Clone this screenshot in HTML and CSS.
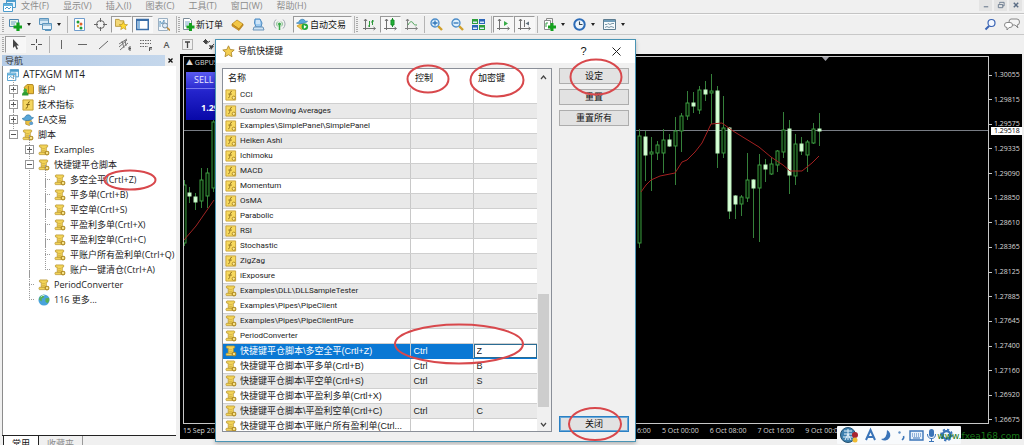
FILE: index.html
```html
<!DOCTYPE html>
<html lang="zh-CN">
<head>
<meta charset="utf-8">
<title>ATFXGM MT4</title>
<link rel="stylesheet" href="styles.css">
</head>
<body>
<svg class="defs" aria-hidden="true">
  <symbol id="i-app" viewBox="0 0 13 13"><path d="M3.500.5h9v8h-9z" fill="#e8f4fc" stroke="#4c9ccc"/><path d="M3.500 2h9" stroke="#4c9ccc" stroke-width="2"/><path d="M.5 4.500h9v8h-9z" fill="#fff" stroke="#4c9ccc"/><path d="M.5 6h9" stroke="#5fb0dc" stroke-width="2"/><path d="M2 10l2-2 2 2 2-2" fill="none" stroke="#4c9ccc"/></symbol>
  <symbol id="i-new" viewBox="0 0 13 13"><path d="M.5 1.500h9v7h-9z" fill="#eaf6ea" stroke="#4f86ae"/><path d="M2 4h5M2 6h4" stroke="#6da0c2"/><path d="M9 4.500V13M4.500 9H13" stroke="#12a01c" stroke-width="3.200"/></symbol>
  <symbol id="i-wins" viewBox="0 0 13 13"><path d="M.5.5h9v6h-9z" fill="#d4e7f5" stroke="#5c95bd"/><path d="M1 2h8" stroke="#5c95bd"/><path d="M3.500 5.500h9v6h-9z" fill="#e8f3fb" stroke="#5c95bd"/><path d="M4 7h8M6 12.500h6" stroke="#5c95bd"/></symbol>
  <symbol id="i-market" viewBox="0 0 13 13"><path d="M1.500.5h10v12h-10z" fill="#fdfdfd" stroke="#6f9ccc"/><circle cx="5" cy="4" r="1.500" fill="#1e9e34"/><circle cx="8" cy="6" r="1.500" fill="#e0602a"/><circle cx="5" cy="8" r="1.200" fill="#d8a030"/><circle cx="8" cy="10" r="1.500" fill="#1e9e34"/></symbol>
  <symbol id="i-target" viewBox="0 0 13 13"><circle cx="6.500" cy="6.500" r="4" fill="none" stroke="#666"/><path d="M6.500 0v13M0 6.500h13" stroke="#666"/><path d="M6.500 4v5M4 6.500h5" stroke="#f4f4f4" stroke-width="2"/></symbol>
  <symbol id="i-navstar" viewBox="0 0 14 13"><path d="M.5 2.500V1h4l1 1.500h4v6h-9z" fill="#f3d878" stroke="#b8983c"/><path d="M9 3.500l1.300 2.900 3.200.3-2.400 2.100.7 3.200L9 10.300 6.200 12l.7-3.200-2.400-2.100 3.200-.3z" fill="#ffd92e" stroke="#b8901c" stroke-width=".7"/></symbol>
  <symbol id="i-panel" viewBox="0 0 13 13"><path d="M.75 1.500h11.500v10H.750z" fill="#fff" stroke="#3a6ea8" stroke-width="1.500"/><path d="M1 2h11" stroke="#3a6ea8" stroke-width="2"/><path d="M2 3h2v8H2z" fill="#8ab8e0"/></symbol>
  <symbol id="i-tester" viewBox="0 0 13 13"><path d="M1.500.5h9v12h-9z" fill="#f2f7fb" stroke="#9cb0c2"/><path d="M3 9V3l2 3 2-4v5" fill="none" stroke="#6a9fc4"/><circle cx="8" cy="7.500" r="2.500" fill="#dcecf8" stroke="#7890a8"/><path d="M10 9.500l3 3" stroke="#c09040" stroke-width="1.600"/></symbol>
  <symbol id="i-order" viewBox="0 0 13 13"><path d="M1.500.5h6l2 2v9h-8z" fill="#fff" stroke="#7b8b98"/><path d="M3 4h5M3 6h4M3 8h2" stroke="#7fa8c8"/><path d="M8.500 5v8M4.500 9h8" stroke="#14a11e" stroke-width="3"/></symbol>
  <symbol id="i-book" viewBox="0 0 13 13"><path d="M1 6l5-4 6 4-4 5z" fill="#f3c746" stroke="#b07e14" stroke-width=".7"/><path d="M1 6v2l7 4.500 4-5V6l-4 5z" fill="#d79a20" stroke="#a87410" stroke-width=".6"/></symbol>
  <symbol id="i-user" viewBox="0 0 13 13"><path d="M3 1h5l2 4-1 4H4L2.500 5z" fill="#9dcaf0" stroke="#4a88c0"/><path d="M4 3h4M4 5h4" stroke="#fff"/><path d="M1 12l1-3h9l1 3z" fill="#cfe3f3" stroke="#6a94ba"/></symbol>
  <symbol id="i-signal" viewBox="0 0 13 13"><path d="M3 1.500a6 6 0 0 0 0 9M10 1.500a6 6 0 0 1 0 9" fill="none" stroke="#a0a8b0"/><path d="M5 3.500a3 3 0 0 0 0 5M8 3.500a3 3 0 0 1 0 5" fill="none" stroke="#7bbd84"/><circle cx="6.500" cy="6" r="1.500" fill="#38a848"/><path d="M6.500 7v5" stroke="#38a848" stroke-width="1.500"/></symbol>
  <symbol id="i-auto" viewBox="0 0 14 13"><path d="M1 8L7 5l5 3-6 4z" fill="#f0c445" stroke="#b68a1c" stroke-width=".7"/><path d="M.5 5C3 6 10 6 12.500 3L10 3C9 0 4 0 3 4z" fill="#5aa9de" stroke="#2f78ac" stroke-width=".7"/><circle cx="9.500" cy="9" r="3.500" fill="#22aa38"/><path d="M8.500 7v4l3-2z" fill="#fff"/></symbol>
  <symbol id="i-bars" viewBox="0 0 13 13"><path d="M2.500 1v11M0 10.500h12M1 3l1.500-2L4 3M10.500 9l2 1.500-2 1.500" fill="none" stroke="#707070"/><path d="M6.500 3v6M5 8h2M9.500 2v5M8 4h2M9 3h2" stroke="#2a9838"/></symbol>
  <symbol id="i-candle" viewBox="0 0 13 13"><path d="M2.500 1v11M0 10.500h12M1 3l1.500-2L4 3M10.500 9l2 1.500-2 1.500" fill="none" stroke="#707070"/><path d="M8.500 0v9" stroke="#168c26"/><path d="M7 2h3v5H7z" fill="#22b438" stroke="#168c26"/></symbol>
  <symbol id="i-line" viewBox="0 0 13 13"><path d="M2.500 1v11M0 10.500h12M1 3l1.500-2L4 3M10.500 9l2 1.500-2 1.500" fill="none" stroke="#808080"/><path d="M3 7c2-4 4-4 5-2s2 2 4 2" fill="none" stroke="#4aa055"/></symbol>
  <symbol id="i-zin" viewBox="0 0 13 13"><path d="M8 8l4 4" stroke="#d0a02c" stroke-width="2.400"/><circle cx="5" cy="5" r="4" fill="#dff0fc" stroke="#4c8cc8" stroke-width="1.300"/><path d="M5 2.500v5M2.500 5h5" stroke="#2f74b8" stroke-width="1.300"/></symbol>
  <symbol id="i-zout" viewBox="0 0 13 13"><path d="M8 8l4 4" stroke="#d0a02c" stroke-width="2.400"/><circle cx="5" cy="5" r="4" fill="#dff0fc" stroke="#4c8cc8" stroke-width="1.300"/><path d="M2.500 5h5" stroke="#2f74b8" stroke-width="1.300"/></symbol>
  <symbol id="i-tiles" viewBox="0 0 13 13"><path d="M0 1h6v5H0z" fill="#2d9e3a"/><path d="M7 1h6v5H7z" fill="#2b66b8"/><path d="M0 7h6v5H0z" fill="#2b66b8"/><path d="M7 7h6v5H7z" fill="#2d9e3a"/><path d="M1 3.500h4v1.500H1zM8 3.500h4v1.500H8zM1 9.500h4V11H1zM8 9.500h4V11H8z" fill="#dbeafa"/></symbol>
  <symbol id="i-scroll" viewBox="0 0 13 13"><path d="M2.500 1v11M0 10.500h12M1 3l1.500-2L4 3M10.500 9l2 1.500-2 1.500" fill="none" stroke="#707070"/><path d="M7 3v5l4-2.500z" fill="#38ac48"/></symbol>
  <symbol id="i-shift" viewBox="0 0 13 13"><path d="M2.500 1v11M0 10.500h12M1 3l1.500-2L4 3M10.500 9l2 1.500-2 1.500" fill="none" stroke="#707070"/><path d="M6.500 2v7" stroke="#707070"/><path d="M11 3.500v4L7.500 5.500z" fill="#60707c"/></symbol>
  <symbol id="i-ind" viewBox="0 0 13 13"><path d="M3.500.5h6v9h-6z" fill="#f4f4f4" stroke="#8a8a8a"/><path d="M1.500 2.500h6v9h-6z" fill="#fff" stroke="#8a8a8a"/><path d="M3 9V5h2" fill="none" stroke="#3aa048"/><path d="M9 5v8M5 9h8" stroke="#14a11e" stroke-width="3"/></symbol>
  <symbol id="i-clock" viewBox="0 0 13 13"><circle cx="6.500" cy="6.500" r="5.200" fill="#eef6fd" stroke="#2c6cb8" stroke-width="2"/><path d="M6.500 3.500v3h3" fill="none" stroke="#345" stroke-width="1.100"/></symbol>
  <symbol id="i-tmpl" viewBox="0 0 13 13"><path d="M.5 1.500h12v10H.5z" fill="#f6fafc" stroke="#5c7c90"/><path d="M1 3h11" stroke="#6f9cb8" stroke-width="2"/><path d="M2 6.500h2l1-1 2 1 2-1h2M2 9.500l2-1 2 1 2-1 3 1" fill="none" stroke="#7d99a8"/></symbol>
  <symbol id="i-find" viewBox="0 0 13 13"><path d="M1.500 11.500L5 8" stroke="#3a64b4" stroke-width="2"/><circle cx="7.500" cy="5" r="3.500" fill="#f4f8ff" stroke="#3a64b4" stroke-width="1.200"/></symbol>
  <symbol id="i-chat" viewBox="0 0 16 13"><path d="M7 1h6q2.500 0 2.500 3T13 7l1 3-3-3H7Q5 7 5 4t2-3z" fill="#f4f4f4" stroke="#888"/><path d="M3 4.500h3q2.500 0 2.500 2.500T6 9.500H5L3 12V9.500Q.5 9.500.5 7T3 4.500z" fill="#fff" stroke="#888"/></symbol>
  <symbol id="i-cursor" viewBox="0 0 13 13"><path d="M4 1v9l2-2 1.500 3.500L9 11 7.500 7.500H10z" fill="#444"/></symbol>
  <symbol id="i-cross" viewBox="0 0 13 13"><path d="M6.500 1v4M6.500 8v4M1 6.500h4M8 6.500h4" stroke="#555"/></symbol>
  <symbol id="i-vl" viewBox="0 0 13 13"><path d="M6.500 2v9" stroke="#666"/></symbol>
  <symbol id="i-hl" viewBox="0 0 13 13"><path d="M2 6.500h9" stroke="#666"/></symbol>
  <symbol id="i-dl" viewBox="0 0 13 13"><path d="M2 11l9-8" stroke="#666"/></symbol>
  <symbol id="i-chan" viewBox="0 0 13 13"><path d="M1 9l8-7M2 12l8-7M1 6l8-5M4 3l2 7M7 2l1 6" fill="none" stroke="#777"/><path d="M13 9h-2v3h2M11 10.500h2" fill="none" stroke="#555"/></symbol>
  <symbol id="i-fib" viewBox="0 0 13 13"><path d="M1 2.500h11M1 5.500h11M1 8.500h8" stroke="#666" stroke-dasharray="1.500 1"/><path d="M10.500 13V9.500H13M10.500 11H13" fill="none" stroke="#555"/></symbol>
  <symbol id="i-textbox" viewBox="0 0 13 13"><path d="M1.500 1.500h10v10h-10z" fill="none" stroke="#777" stroke-dasharray="1 1"/><path d="M4 4h5M6.500 4v6" stroke="#444" stroke-width="1.300"/></symbol>
  <symbol id="i-arrows" viewBox="0 0 13 13"><path d="M3.500 1v5M1 3.500h5M4 6l4-3M7 11l5-5" stroke="#444"/><path d="M7 7l5 1-3 4z" fill="#444"/><path d="M2 2h3v3H2z" fill="#444"/></symbol>
  <symbol id="i-star" viewBox="0 0 13 13"><path d="M6.500.8l1.700 3.700 4 .5-3 2.700.8 4-3.500-2-3.500 2 .8-4-3-2.700 4-.5z" fill="#f4cf52" stroke="#b08a2c" stroke-width=".9"/></symbol>
  <symbol id="i-acct" viewBox="0 0 13 13"><path d="M2.500 3.500l3-3h6l1 2v8h-9z" fill="#e9bd35" stroke="#a8801c"/><path d="M7 2v9" stroke="#a8801c"/><circle cx="3.500" cy="7" r="2" fill="#45b040"/><path d="M0 12.500q0-4 3.500-4T7 12.500z" fill="#2f9c34"/></symbol>
  <symbol id="i-tech" viewBox="0 0 13 13"><path d="M1 1h11v11H1z" fill="#f5d660" stroke="#c09a2c"/><path d="M8.500 3Q7 2.500 6.500 5L6 8Q5.500 10.500 4 10M4.500 6h4" fill="none" stroke="#7a5c10"/></symbol>
  <symbol id="i-ea" viewBox="0 0 13 13"><path d="M4 7h6l1 3-3 2.500L4 11z" fill="#edc040" stroke="#a88428" stroke-width=".7"/><path d="M0 5C2 8 9 8 12.500 4L10 3.500C9 0 4 0 3 4z" fill="#58a6d8" stroke="#2f76a4" stroke-width=".7"/><circle cx="10" cy="10" r="2" fill="#5f9fd0"/></symbol>
  <symbol id="i-script" viewBox="0 0 13 13"><path d="M2 1h8q1.500 1 0 2.500H9V9H3.500V3.500H2Q.5 2 2 1z" fill="#f2d358" stroke="#b9952f" stroke-width=".8"/><path d="M1.500 9H8v2.500H1.500Q.5 10 1.500 9z" fill="#f2d358" stroke="#b9952f" stroke-width=".8"/><path d="M4.500 5h3M4.500 7h3" stroke="#c9a63c" stroke-width=".7"/><circle cx="9.800" cy="9.800" r="2" fill="#f6e28a" stroke="#b08a22" stroke-width="1.200"/></symbol>
  <symbol id="i-fx" viewBox="0 0 13 13"><path d="M1 1h10.500v11H1z" fill="#f7d95e" stroke="#c8a238"/><path d="M7.500 2.500Q6 2 5.500 5L5 8Q4.500 10 3.500 9.500M3.500 5.500h4" fill="none" stroke="#8a6a1c" stroke-width=".9"/><circle cx="9.500" cy="9.500" r="1.800" fill="#fae896" stroke="#b08a22"/></symbol>
  <symbol id="i-globe" viewBox="0 0 13 13"><circle cx="6.500" cy="6.500" r="6" fill="#49a3dc"/><path d="M2 3q3-3 5-2L6 4 4 5v3L1 6zM8 5l4-1q1 4-2 6L8 8z" fill="#59b052"/><path d="M3 3q2-2 4-1.500" stroke="#d9f1ff" fill="none"/></symbol>
</svg>

<div class="app">
  <header class="menubar">
    <svg class="ic menu-logo"><use href="#i-app"/></svg>
    <nav class="menus"><button>文件(F)</button><button>显示(V)</button><button>插入(I)</button><button>图表(C)</button><button>工具(T)</button><button>窗口(W)</button><button>帮助(H)</button></nav>
    <div class="winctl">
      <button aria-label="最小化"><svg viewBox="0 0 9 9"><path d="M2 6.500h5" stroke="#68788c" stroke-width="1.200"/></svg></button>
      <button aria-label="还原"><svg viewBox="0 0 9 9"><path d="M3 3V1.500h5v4H6M1.500 4h5v3.500h-5z" fill="none" stroke="#68788c"/></svg></button>
      <button aria-label="关闭窗口"><svg viewBox="0 0 9 9"><path d="M2 2l5 5M7 2L2 7" stroke="#5a6c84" stroke-width="1.600"/></svg></button>
    </div>
  </header>

  <div class="toolbar">
    <i class="grip"></i>
    <button class="tb drop" aria-label="新图表"><svg class="ic"><use href="#i-new"/></svg></button>
    <button class="tb drop" aria-label="模板窗口"><svg class="ic"><use href="#i-wins"/></svg></button>
    <i class="sep"></i>
    <button class="tb" aria-label="市场报价"><svg class="ic"><use href="#i-market"/></svg></button>
    <button class="tb" aria-label="数据窗口"><svg class="ic"><use href="#i-target"/></svg></button>
    <button class="tb on" aria-label="导航"><svg class="ic"><use href="#i-navstar"/></svg></button>
    <button class="tb on" aria-label="终端"><svg class="ic"><use href="#i-panel"/></svg></button>
    <button class="tb" aria-label="测试"><svg class="ic"><use href="#i-tester"/></svg></button>
    <i class="sep"></i><i class="grip"></i>
    <button class="tb label"><svg class="ic"><use href="#i-order"/></svg>新订单</button>
    <button class="tb" aria-label="编辑器"><svg class="ic"><use href="#i-book"/></svg></button>
    <button class="tb" aria-label="用户"><svg class="ic"><use href="#i-user"/></svg></button>
    <button class="tb" aria-label="信号"><svg class="ic"><use href="#i-signal"/></svg></button>
    <button class="tb label on"><svg class="ic"><use href="#i-auto"/></svg>自动交易</button>
    <i class="sep"></i><i class="grip"></i>
    <button class="tb" aria-label="柱状图"><svg class="ic"><use href="#i-bars"/></svg></button>
    <button class="tb on" aria-label="蜡烛图"><svg class="ic"><use href="#i-candle"/></svg></button>
    <button class="tb" aria-label="折线图"><svg class="ic"><use href="#i-line"/></svg></button>
    <i class="sep"></i>
    <button class="tb" aria-label="放大"><svg class="ic"><use href="#i-zin"/></svg></button>
    <button class="tb" aria-label="缩小"><svg class="ic"><use href="#i-zout"/></svg></button>
    <button class="tb" aria-label="平铺"><svg class="ic"><use href="#i-tiles"/></svg></button>
    <i class="sep"></i>
    <button class="tb on" aria-label="自动滚动"><svg class="ic"><use href="#i-scroll"/></svg></button>
    <button class="tb on" aria-label="图表平移"><svg class="ic"><use href="#i-shift"/></svg></button>
    <i class="sep"></i>
    <button class="tb drop" aria-label="指标"><svg class="ic"><use href="#i-ind"/></svg></button>
    <button class="tb drop" aria-label="时段"><svg class="ic"><use href="#i-clock"/></svg></button>
    <button class="tb drop" aria-label="模板"><svg class="ic"><use href="#i-tmpl"/></svg></button>
    <div class="tb-right">
      <button class="tb" aria-label="搜索"><svg class="ic"><use href="#i-find"/></svg></button>
      <button class="tb" aria-label="聊天"><svg class="ic wide"><use href="#i-chat"/></svg></button>
    </div>
  </div>

  <div class="toolbar second">
    <i class="grip"></i>
    <button class="tb on" aria-label="光标"><svg class="ic"><use href="#i-cursor"/></svg></button>
    <button class="tb" aria-label="十字线"><svg class="ic"><use href="#i-cross"/></svg></button>
    <i class="sep"></i>
    <button class="tb" aria-label="垂直线"><svg class="ic"><use href="#i-vl"/></svg></button>
    <button class="tb" aria-label="水平线"><svg class="ic"><use href="#i-hl"/></svg></button>
    <button class="tb" aria-label="趋势线"><svg class="ic"><use href="#i-dl"/></svg></button>
    <button class="tb" aria-label="通道"><svg class="ic"><use href="#i-chan"/></svg></button>
    <button class="tb" aria-label="斐波纳契"><svg class="ic"><use href="#i-fib"/></svg></button>
    <button class="tb glyph">A</button>
    <button class="tb" aria-label="文本标签"><svg class="ic"><use href="#i-textbox"/></svg></button>
    <button class="tb" aria-label="箭头"><svg class="ic"><use href="#i-arrows"/></svg></button>
  </div>

  <main class="workspace">
    <aside class="navigator">
      <div class="nav-title"><h2>导航</h2><button aria-label="关闭导航"><svg viewBox="0 0 7 7"><path d="M1.500 1.500l4 4M5.500 1.500l-4 4" stroke="#111" stroke-width="1.300"/></svg></button></div>
      <div class="tree">
        <div class="row root"><svg class="ic"><use href="#i-app"/></svg><span>ATFXGM MT4</span></div>
        <ul>
          <li><div class="row"><i class="tg plus"></i><svg class="ic"><use href="#i-acct"/></svg><span>账户</span></div></li>
          <li><div class="row"><i class="tg plus"></i><svg class="ic"><use href="#i-tech"/></svg><span>技术指标</span></div></li>
          <li><div class="row"><i class="tg plus"></i><svg class="ic"><use href="#i-ea"/></svg><span>EA交易</span></div></li>
          <li><div class="row"><i class="tg"></i><svg class="ic"><use href="#i-script"/></svg><span>脚本</span></div>
            <ul>
              <li><div class="row"><i class="tg plus"></i><svg class="ic"><use href="#i-script"/></svg><span>Examples</span></div></li>
              <li><div class="row"><i class="tg"></i><svg class="ic"><use href="#i-script"/></svg><span>快捷键平仓脚本</span></div>
                <ul>
                  <li><div class="row"><i class="dash"></i><svg class="ic"><use href="#i-script"/></svg><span>多空全平(Crtl+Z)</span></div></li>
                  <li><div class="row"><i class="dash"></i><svg class="ic"><use href="#i-script"/></svg><span>平多单(Crtl+B)</span></div></li>
                  <li><div class="row"><i class="dash"></i><svg class="ic"><use href="#i-script"/></svg><span>平空单(Crtl+S)</span></div></li>
                  <li><div class="row"><i class="dash"></i><svg class="ic"><use href="#i-script"/></svg><span>平盈利多单(Crtl+X)</span></div></li>
                  <li><div class="row"><i class="dash"></i><svg class="ic"><use href="#i-script"/></svg><span>平盈利空单(Crtl+C)</span></div></li>
                  <li><div class="row"><i class="dash"></i><svg class="ic"><use href="#i-script"/></svg><span>平账户所有盈利单(Ctrl+Q)</span></div></li>
                  <li><div class="row"><i class="dash"></i><svg class="ic"><use href="#i-script"/></svg><span>账户一键清仓(Ctrl+A)</span></div></li>
                </ul>
              </li>
              <li><div class="row"><i class="dash"></i><svg class="ic"><use href="#i-script"/></svg><span>PeriodConverter</span></div></li>
              <li><div class="row"><i class="dash"></i><svg class="ic"><use href="#i-globe"/></svg><span>116 更多...</span></div></li>
            </ul>
          </li>
        </ul>
      </div>
      <div class="nav-tabs"><button class="active">常用</button><button>收藏夹</button></div>
    </aside>

    <section class="chart">
      <div class="plot-row">
        <div class="plot">
          <svg class="candles" viewBox="184 57 804 366" preserveAspectRatio="xMinYMin meet" aria-label="GBPUSD 价格图">
            <path d="M184 130.500h804" stroke="#787c84"/>
            <g id="bars"></g>
            <path d="M184 240l12-14 18-26" fill="none" stroke="#a02424"/>
            <path d="M641 192l5-7 5-5 9-4 15-3 7-11 5-2 8-8 7-9 9-19 11-1 11 8 26 16 12 10 12 8 7 6h12l10-8 7-7" fill="none" stroke="#a42020"/>
            <path d="M822 57h7l-3.500 4z" fill="#a0a0a8"/>
          </svg>
          <div class="symbol">▲ GBPUSD,H4</div>
          <div class="quote"><span>SELL</span><b>1.29</b></div>
        </div>
        <div class="prices">
          <span>1.30055</span><span>1.29815</span><span>1.29575</span><span>1.29335</span><span>1.29090</span><span>1.28850</span><span>1.28610</span><span>1.28365</span><span>1.28125</span><span>1.27885</span><span>1.27645</span><span>1.27400</span><span>1.27160</span><span>1.26920</span><span>1.26675</span>
          <b class="last">1.29518</b>
        </div>
      </div>
      <div class="times"><span class="first">15 Sep 2020</span><span>1 Oct 16:00</span><span>5 Oct 00:00</span><span>6 Oct 08:00</span><span>7 Oct 16:00</span><span>9 Oct 00:00</span></div>
    </section>
  </main>
</div>

<svg class="mark tree-mark" viewBox="0 0 54 22"><ellipse cx="27" cy="11" rx="25.500" ry="9.500"/></svg>

<section class="dialog" role="dialog" aria-labelledby="dlg-title">
  <div class="dlg-head"><svg class="ic"><use href="#i-star"/></svg><h1 id="dlg-title">导航快捷键</h1>
    <button aria-label="帮助">?</button>
    <button aria-label="关闭对话框"><svg viewBox="0 0 9 9"><path d="M.5.5l8 8M8.500.5l-8 8" stroke="#222"/></svg></button>
  </div>
  <div class="dlg-body">
    <div class="grid">
      <table>
        <thead><tr><th class="c1">名称</th><th class="c2">控制</th><th class="c3">加密键</th></tr></thead>
        <tbody id="keys"></tbody>
      </table>
      <div class="scroll" aria-hidden="true">
        <svg viewBox="0 0 7 5"><path d="M1 4l2.500-3L6 4" fill="none" stroke="#444" stroke-width="1.200"/></svg>
        <i></i>
        <svg viewBox="0 0 7 5"><path d="M1 1l2.500 3L6 1" fill="none" stroke="#444" stroke-width="1.200"/></svg>
      </div>
    </div>
    <div class="actions"><button>设定</button><button>重置</button><button>重置所有</button><button class="default">关闭</button></div>
  </div>
  <svg class="mark" viewBox="215 39 421 403">
    <ellipse cx="428" cy="79" rx="20.500" ry="13.500"/><ellipse cx="497" cy="80" rx="26.500" ry="16.500"/><ellipse cx="596" cy="77" rx="25.500" ry="17.500"/><ellipse cx="459" cy="344" rx="64" ry="19.500"/><ellipse cx="595" cy="424" rx="26" ry="16"/>
  </svg>
</section>

<div class="ime">
  <svg viewBox="0 0 124 18">
    <circle cx="11" cy="9" r="7.500" fill="#3c7fae" stroke="#24506e"/><path d="M7 5h8M11 3v11M7 8h8M8 14l3-6 3 6M6 11h10" stroke="#e6f4fc" fill="none"/><circle cx="18" cy="9" r="3" fill="#a82430"/><circle cx="18" cy="14" r="2.500" fill="#f0bc34"/>
    <path d="M29 14l4.500-10 4.500 10M30.500 11h6" fill="none" stroke="#3a74b8" stroke-width="2"/>
    <path d="M50 4a5.500 5.500 0 1 1-6 9q6 0 6-9z" fill="#3a74b8"/>
    <circle cx="62.500" cy="6.500" r="1.200" fill="#5b8cc4"/><path d="M66.500 10q1 2-1.500 4" fill="none" stroke="#3a74b8" stroke-width="1.500"/>
    <path d="M73 5h13v9H73z" fill="#e8f1fb" stroke="#3a74b8" stroke-width="1.400"/><path d="M75 8h10M75 10h10" stroke="#3a74b8" stroke-dasharray="1 1"/><path d="M76 12h7" stroke="#3a74b8"/>
    <rect x="92" y="3" width="5" height="8" rx="2.500" fill="#3a74b8"/><path d="M90.500 8q0 4.500 4 4.500t4-4.500M94.500 12v3M92 15.500h5" fill="none" stroke="#3a74b8"/>
    <circle cx="109.500" cy="9" r="3.800" fill="none" stroke="#3a74b8" stroke-width="2.200"/><circle cx="109.500" cy="9" r="5.500" fill="none" stroke="#3a74b8" stroke-width="1.800" stroke-dasharray="2.200 2.100"/>
  </svg>
</div>
<div class="site">www.fxea168.com</div>
<script src="app.js"></script>
</body>
</html>
```

FILE: styles.css
```css
* { box-sizing: border-box; }
html, body { height: 100%; }
body {
  margin: 0;
  position: relative;
  overflow: hidden;
  background: #f0f0f0;
  color: #1c1c1c;
  font: 9px/15px "Open Sans", "Noto Sans CJK SC", sans-serif;
}
button { margin: 0; padding: 0; border: 0; background: none; font: inherit; color: inherit; }
ul { margin: 0; padding: 0; list-style: none; }
h1, h2 { margin: 0; font: inherit; }
.defs { position: absolute; width: 0; height: 0; }
.ic { display: block; flex: none; width: 13px; height: 13px; }
.ic.wide { width: 16px; }

.app { display: flex; flex-direction: column; height: 100%; }

.menubar { display: flex; align-items: center; height: 14px; padding: 0 2px 3px 3px; border-bottom: 1px solid #c4c4c4; color: #8c8c8c; line-height: 11px; }
.menus { display: flex; gap: 14px; margin-left: 5px; }
.winctl { display: flex; gap: 2px; margin-left: auto; }
.winctl button { display: flex; width: 13px; height: 11px; align-items: center; justify-content: center; background: #e4e4e4; }
.winctl svg { width: 8px; height: 8px; }

.toolbar { display: flex; align-items: center; height: 20px; padding: 0 2px; border-top: 1px solid #fafafa; }
.second { border-top: 1px solid #c8c8c8; }
.grip { flex: none; width: 2px; height: 16px; margin-right: 1px; background: repeating-linear-gradient(#aaa 0 1px, transparent 1px 2px); }
.sep { flex: none; width: 1px; height: 17px; margin: 0 1px 0 2px; background: #b4b4b4; }
.tb { display: flex; flex: none; align-items: center; justify-content: center; width: 21px; height: 17px; border: 1px solid transparent; }
.tb.on { border-color: #9a9a9a #f8f8f8 #f8f8f8 #9a9a9a; background: #f7f7f7; }
.tb.drop { width: 30px; gap: 5px; }
.tb.drop::after { content: ""; border: 2px solid transparent; border-top: 3px solid #222; border-bottom: 0; }
.tb.label { width: auto; gap: 1px; padding: 0 3px 0 0; color: #111; }
.tb.label.on { margin-left: 3px; padding: 0 5px 0 2px; }
.tb.glyph { font-weight: 600; color: #555; }
.tb-right { display: flex; margin-left: auto; }

.workspace { display: flex; flex: 1; min-height: 0; }
.navigator { display: flex; flex-direction: column; flex: none; width: 178px; padding-left: 2px; padding-right: 2px; }
.nav-title { display: flex; align-items: center; justify-content: space-between; height: 11px; margin-top: 1px; padding: 0 0 0 3px; line-height: 11px; background: linear-gradient(90deg, #b4cbe6, #c6d8ec); color: #333; }
.nav-title button { display: flex; width: 11px; height: 11px; align-items: center; justify-content: center; background: #f0f0f0; }
.nav-title svg { width: 7px; height: 7px; }
.tree { flex: 1; min-height: 0; overflow: hidden; padding: 1px 0 0 4px; border-left: 1px solid #8c8c8c; background: #fff; }
.row { display: flex; align-items: center; height: 15px; gap: 4px; white-space: nowrap; }
.root { font-size: 10px; }
.row > .ic { width: 12px; height: 12px; }
.tree > ul { margin-left: 2px; }
li > ul { margin-left: 16px; }
.tree li { position: relative; }
.tree li::before { content: ""; position: absolute; left: 4px; top: -7px; bottom: 0; border-left: 1px dotted #9a9a9a; }
.tree li:last-child::before { bottom: auto; height: 15px; }
.tg { position: relative; flex: none; width: 9px; height: 9px; border: 1px solid #989898; background: linear-gradient(#555, #555) center / 5px 1px no-repeat #fff; }
.tg.plus { background: linear-gradient(#555, #555) center / 5px 1px no-repeat, linear-gradient(#555, #555) center / 1px 5px no-repeat #fff; }
.dash { flex: none; width: 5px; height: 1px; margin-left: 4px; border-top: 1px dotted #9a9a9a; }
.nav-tabs { display: flex; height: 10px; overflow: hidden; padding-left: 1px; border-top: 1px solid #222; background: #f0f0f0; color: #8c8c8c; }
.nav-tabs button { flex: none; height: 15px; padding: 0 8px; border-right: 1px solid #999; line-height: 13px; }
.nav-tabs .active { border: solid #222; border-width: 0 1px; background: #fff; color: #111; }

.chart { display: flex; flex-direction: column; flex: 1; min-width: 0; margin: 0 2px 6px 2px; padding: 2px 0 0 3px; background: #000; color: #d8d8d8; font-size: 7px; line-height: 8px; }
.plot-row { display: flex; flex: 1; min-height: 0; }
.plot { position: relative; flex: 1; min-width: 0; border: 1px solid #c8c8c8; }
.candles { display: block; width: 100%; height: 100%; }
.symbol { position: absolute; left: 2px; top: 2px; }
.quote { position: absolute; left: 2px; top: 15px; display: flex; flex-direction: column; width: 80px; height: 48px; background: linear-gradient(#5a5af0, #2424cc 40%, #0808a8); color: #e8e8ff; }
.quote span { height: 17px; padding-left: 8px; border-bottom: 1px solid #7878f0; font-size: 9px; line-height: 16px; }
.quote b { padding: 10px 0 0 15px; font-size: 9px; line-height: 18px; color: #fff; }
.prices { position: relative; display: flex; flex-direction: column; justify-content: space-between; width: 33px; padding-top: 15px; }
.prices > span { display: flex; align-items: center; gap: 2px; }
.prices > span::before { content: ""; width: 3px; height: 1px; background: #c8c8c8; }
.last { position: absolute; left: 2px; top: 71px; padding: 0 2px 0 3px; background: #fff; color: #000; font-weight: 400; line-height: 8px; }
.times { position: relative; display: flex; gap: 11px; height: 15px; padding: 3px 180px 0 0; justify-content: flex-end; white-space: nowrap; }
.times .first { margin-right: auto; }

.dialog { position: absolute; left: 215px; top: 39px; width: 421px; height: 403px; display: flex; flex-direction: column; border: 1px solid #4a94b4; background: #f0f0f0; box-shadow: 0 2px 4px rgba(0, 0, 0, .25); font-family: "Liberation Sans", "Noto Sans CJK SC", sans-serif; }
.dlg-head { display: flex; align-items: center; gap: 3px; height: 23px; padding: 0 12px 0 6px; background: #fff; color: #111; }
.dlg-head h1 { margin-right: auto; }
.dlg-head button { width: 11px; margin-left: 20px; font-size: 11px; }
.dlg-head button svg { display: block; width: 9px; height: 9px; }
.dlg-body { display: flex; flex: 1; min-height: 0; gap: 7px; padding: 5px 6px 9px; }
.grid { display: flex; flex: 1; min-width: 0; overflow: hidden; border: 1px solid #8a8f98; background: #fff; }
.grid table { flex: 1; align-self: flex-start; border-collapse: collapse; table-layout: fixed; width: 100%; color: #222; }
.grid th { height: 19px; padding: 0 5px; font-weight: 400; text-align: left; color: #111; }
.c2 { width: 63px; }
.c3 { width: 64px; }
.grid td { height: 15px; padding: 0 3px; line-height: 14px; border-bottom: 1px solid #cfcfcf; border-left: 1px solid #c8c8c8; white-space: nowrap; }
.grid td:first-child { padding-left: 2px; border-left: 0; }
.grid td > div { display: flex; align-items: center; gap: 3px; height: 14px; }
.grid .latin { font-family: Roboto, sans-serif; font-size: 8px; }
.grid td .ic { width: 12px; height: 12px; }
.grid tr:nth-child(even) td { background: #e9e9e9; }
.grid tbody tr.sel td { background: #0a78d4; color: #fff; border-bottom-color: #0a78d4; }
.grid tbody tr.sel td:last-child { padding: 0; background: #fff; }
.grid input { display: block; width: 100%; height: 14px; padding: 0 2px; border: 1px solid #2a6c94; outline: 0; font: inherit; color: #222; }
.scroll { display: flex; flex-direction: column; align-items: center; width: 14px; padding: 6px 2px 4px 1px; background: #f0f0f0; }
.scroll svg { width: 7px; height: 5px; }
.scroll i { width: 11px; height: 113px; margin: auto 0 15px; background: #cdcdcd; }
.actions { display: flex; flex-direction: column; gap: 5px; width: 70px; }
.actions button { height: 16px; border: 1px solid #adadad; background: #e2e2e2; line-height: 14px; color: #111; }
.actions .default { margin-top: auto; border-color: #2a80c4; box-shadow: inset 0 0 0 1px #6aa8d8; }
.mark { position: absolute; left: -1px; top: -1px; width: 421px; height: 403px; fill: none; stroke: #d8484c; stroke-width: 2; pointer-events: none; }
.tree-mark { left: 103px; top: 169px; width: 54px; height: 22px; }

.ime { position: absolute; right: 63px; bottom: 1px; width: 124px; height: 18px; border-radius: 1px; background: #f8fafc; }
.ime svg { display: block; width: 124px; height: 18px; }
.site { position: absolute; right: 4px; bottom: 1px; color: #187818; font: 9px/16px "DejaVu Sans", sans-serif; }
```

FILE: app.js
```js
// x, high, body top, body bottom, low, filled
const bars = [
  [184, 180, 185, 243, 246, 0], [189, 187, 193, 196, 203, 1], [195, 193, 197, 202, 210, 1],
  [201, 168, 180, 201, 208, 0], [207, 168, 173, 196, 208, 0], [213, 118, 122, 188, 192, 0],
  [639, 129, 136, 243, 248, 0], [645, 131, 137, 155, 181, 1], [651, 137, 152, 154, 191, 0],
  [657, 141, 145, 153, 160, 0], [663, 129, 140, 153, 173, 0], [669, 134, 140, 146, 147, 1],
  [675, 117, 131, 146, 185, 0], [681, 113, 116, 131, 152, 0], [687, 91, 103, 116, 120, 0],
  [693, 92, 103, 106, 113, 1], [699, 86, 90, 110, 114, 0], [705, 81, 90, 94, 101, 1],
  [711, 74, 91, 93, 124, 0], [717, 86, 91, 153, 168, 1], [723, 96, 128, 153, 158, 0],
  [729, 127, 128, 211, 219, 1], [735, 195, 196, 204, 219, 1], [741, 195, 197, 204, 216, 0],
  [747, 153, 180, 198, 202, 0], [753, 179, 180, 188, 238, 1], [759, 154, 165, 188, 242, 0],
  [765, 159, 165, 169, 182, 1], [771, 157, 164, 174, 175, 0], [777, 150, 151, 165, 172, 0],
  [783, 112, 130, 152, 158, 0], [789, 120, 129, 175, 194, 1], [795, 134, 144, 176, 185, 0],
  [801, 137, 144, 151, 155, 1], [807, 140, 142, 155, 172, 0], [813, 123, 129, 143, 144, 0],
  [819, 113, 129, 131, 146, 1]
];
document.getElementById('bars').innerHTML = bars.map(([x, h, t, b, l, f]) =>
  `<path d="M${x + 0.5} ${h}V${l}" stroke="#35803a"/>` +
  `<rect x="${x - 1}" y="${t}" width="3" height="${b - t}" fill="${f ? '#d8ffd8' : '#001400'}" stroke="${f ? '#c0f4c0' : '#3c9c40'}"/>`
).join('');

// icon, name, control, key
const keys = [
  ['fx', 'CCI'], ['fx', 'Custom Moving Averages'], ['fx', 'Examples\\SimplePanel\\SimplePanel'],
  ['fx', 'Heiken Ashi'], ['fx', 'Ichimoku'], ['fx', 'MACD'], ['fx', 'Momentum'], ['fx', 'OsMA'],
  ['fx', 'Parabolic'], ['fx', 'RSI'], ['fx', 'Stochastic'], ['fx', 'ZigZag'], ['fx', 'iExposure'],
  ['script', 'Examples\\DLL\\DLLSampleTester'], ['script', 'Examples\\Pipes\\PipeClient'],
  ['script', 'Examples\\Pipes\\PipeClientPure'], ['script', 'PeriodConverter'],
  ['script', '快捷键平仓脚本\\多空全平(Crtl+Z)', 'Ctrl', 'Z', true],
  ['script', '快捷键平仓脚本\\平多单(Crtl+B)', 'Ctrl', 'B'],
  ['script', '快捷键平仓脚本\\平空单(Crtl+S)', 'Ctrl', 'S'],
  ['script', '快捷键平仓脚本\\平盈利多单(Crtl+X)'],
  ['script', '快捷键平仓脚本\\平盈利空单(Crtl+C)', 'Ctrl', 'C'],
  ['script', '快捷键平仓脚本\\平账户所有盈利单(Ctrl...']
];
document.getElementById('keys').innerHTML = keys.map(([icon, name, ctl = '', key = '', sel]) =>
  `<tr${sel ? ' class="sel"' : ''}><td><div${/^[A-Za-z]/.test(name) ? ' class="latin"' : ''}><svg class="ic"><use href="#i-${icon}"/></svg>${name}</div></td>` +
  `<td>${ctl}</td><td>${sel ? `<input aria-label="加密键" value="${key}">` : key}</td></tr>`
).join('');
```
